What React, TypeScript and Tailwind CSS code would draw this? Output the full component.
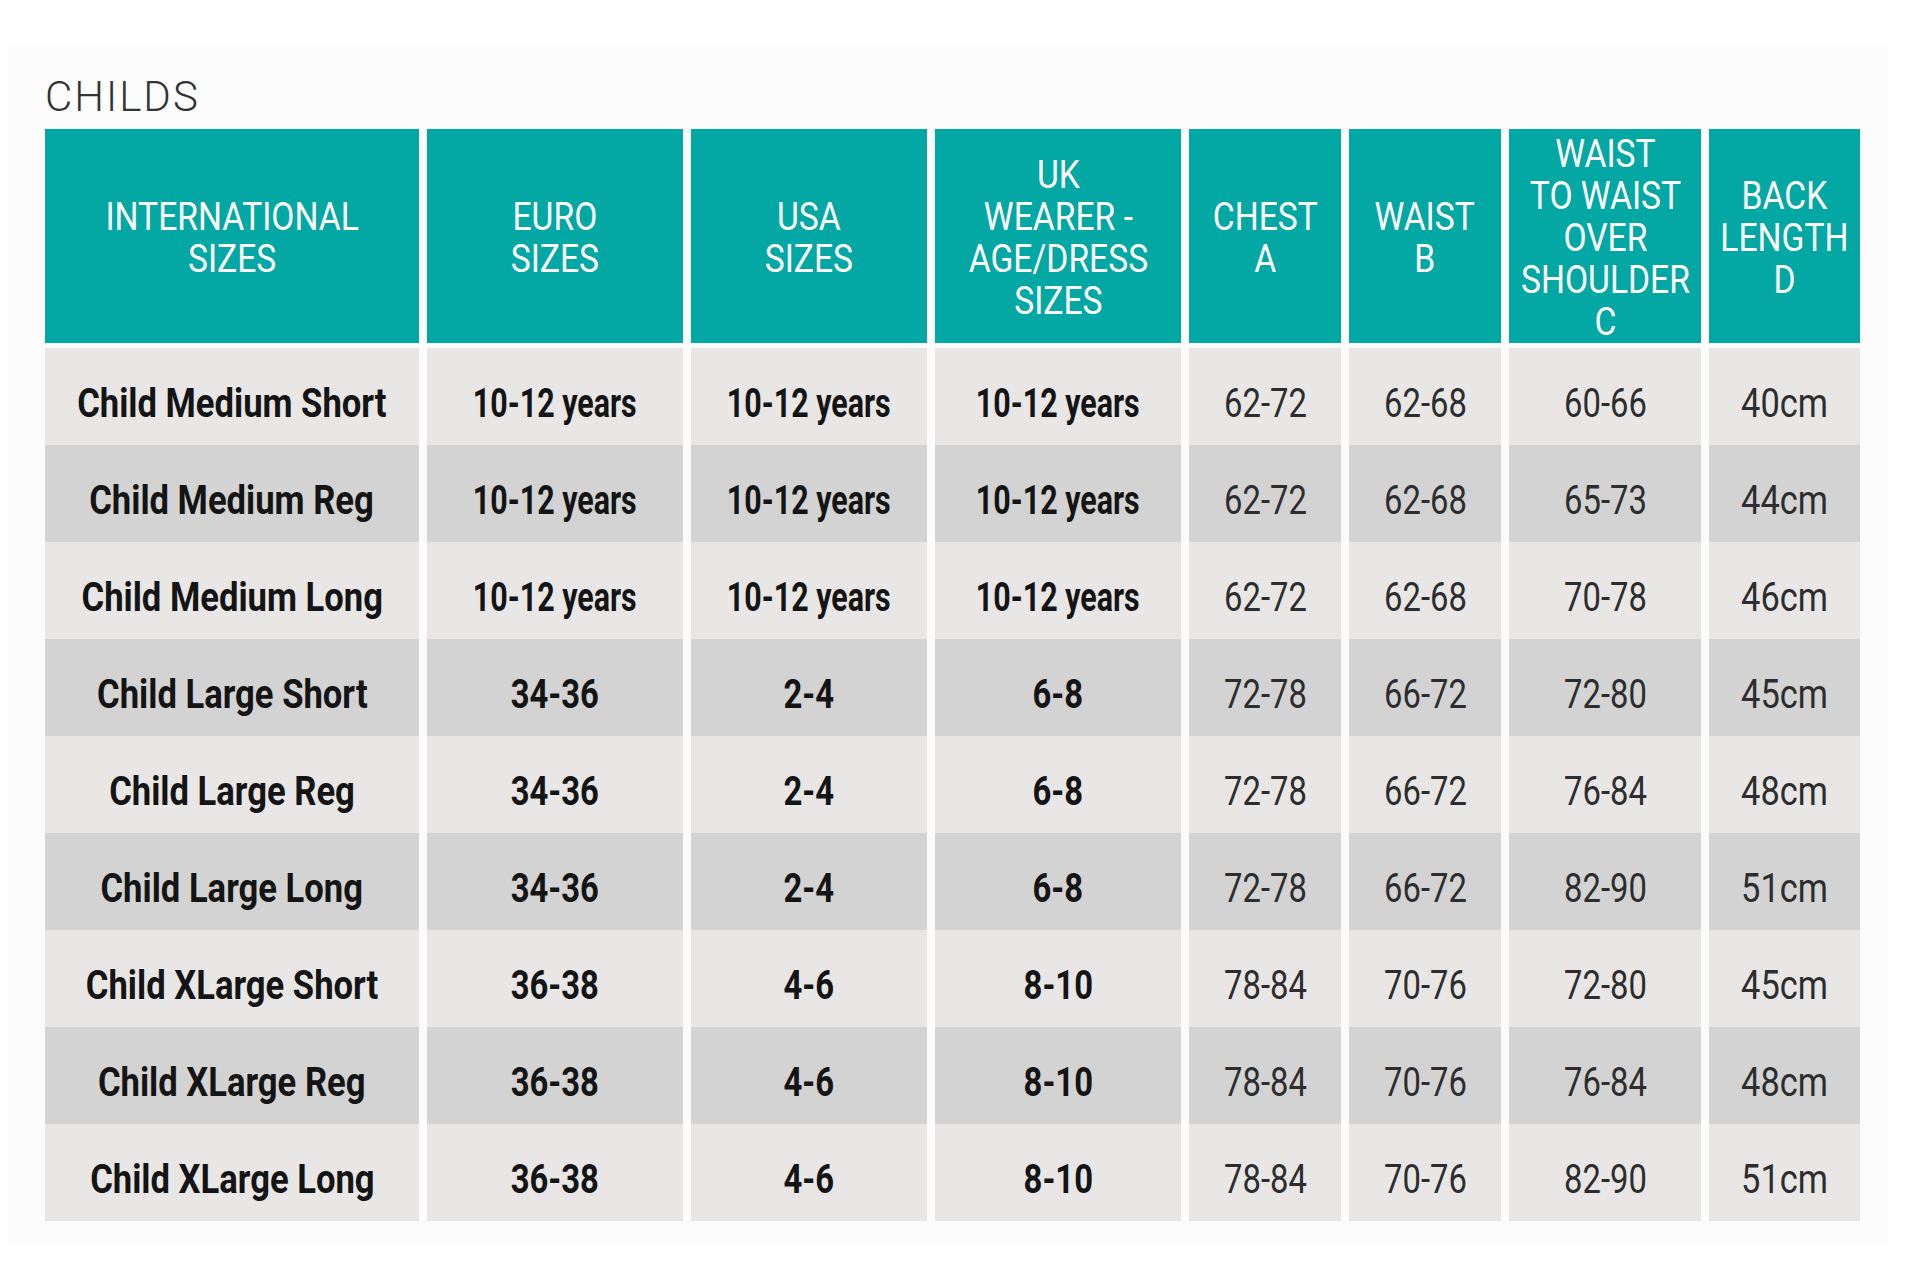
const headers: string[][] = [
  ["INTERNATIONAL", "SIZES"],
  ["EURO", "SIZES"],
  ["USA", "SIZES"],
  ["UK", "WEARER -", "AGE/DRESS", "SIZES"],
  ["CHEST", "A"],
  ["WAIST", "B"],
  ["WAIST", "TO WAIST", "OVER", "SHOULDER", "C"],
  ["BACK", "LENGTH", "D"],
];

const rows: string[][] = [
  ["Child Medium Short", "10-12 years", "10-12 years", "10-12 years", "62-72", "62-68", "60-66", "40cm"],
  ["Child Medium Reg", "10-12 years", "10-12 years", "10-12 years", "62-72", "62-68", "65-73", "44cm"],
  ["Child Medium Long", "10-12 years", "10-12 years", "10-12 years", "62-72", "62-68", "70-78", "46cm"],
  ["Child Large Short", "34-36", "2-4", "6-8", "72-78", "66-72", "72-80", "45cm"],
  ["Child Large Reg", "34-36", "2-4", "6-8", "72-78", "66-72", "76-84", "48cm"],
  ["Child Large Long", "34-36", "2-4", "6-8", "72-78", "66-72", "82-90", "51cm"],
  ["Child XLarge Short", "36-38", "4-6", "8-10", "78-84", "70-76", "72-80", "45cm"],
  ["Child XLarge Reg", "36-38", "4-6", "8-10", "78-84", "70-76", "76-84", "48cm"],
  ["Child XLarge Long", "36-38", "4-6", "8-10", "78-84", "70-76", "82-90", "51cm"],
];

const cols =
  "grid grid-cols-[374px_256px_236px_246px_152px_152px_192px_151px] gap-x-2";

// the source font is narrow, squeeze roboto to match
const squeeze = (cell: string, c: number) => {
  if (c === 0) return "scale-x-[0.865]";
  if (cell.includes("years")) return "scale-x-[0.76]";
  if (cell.includes("cm")) return "scale-x-[0.86]";
  return "scale-x-[0.82]";
};

export default function App() {
  return (
    <div className="w-[1920px] h-[1263px] bg-white pt-[47px] pl-2 font-['Roboto',sans-serif]">
      <div className="w-[1880px] h-[1196px] bg-[#fcfcfc] pt-[29px] pl-[37px]">
        <h1 className="text-[42px] leading-[42px] font-light text-[#333] tracking-[2px]">
          CHILDS
        </h1>

        {/* header */}
        <div className={`${cols} mt-[11px] h-[212px]`}>
          {headers.map((lines, i) => (
            <div
              key={i}
              className="bg-[#03a8a4] flex items-center justify-center pt-1 text-center text-white text-[38px] leading-[42px]"
            >
              <span className="inline-block whitespace-nowrap scale-x-[0.885]">
                {lines.map((l, j) => (
                  <div key={j}>{l}</div>
                ))}
              </span>
            </div>
          ))}
        </div>

        {/* body */}
        <div className="mt-[7px]">
          {rows.map((row, r) => (
            <div key={r} className={`${cols} h-[97px]`}>
              {row.map((cell, c) => (
                <div
                  key={c}
                  className={`flex items-center justify-center pt-[14px] text-[40px] leading-[40px] ${
                    r % 2 === 0 ? "bg-[#e8e7e6]" : "bg-[#d3d3d3]"
                  } ${c < 4 ? "font-bold text-[#141414]" : "font-normal text-[#2d2d2d]"}`}
                >
                  <span className={`inline-block whitespace-nowrap ${squeeze(cell, c)}`}>
                    {cell}
                  </span>
                </div>
              ))}
            </div>
          ))}
        </div>
      </div>
    </div>
  );
}
